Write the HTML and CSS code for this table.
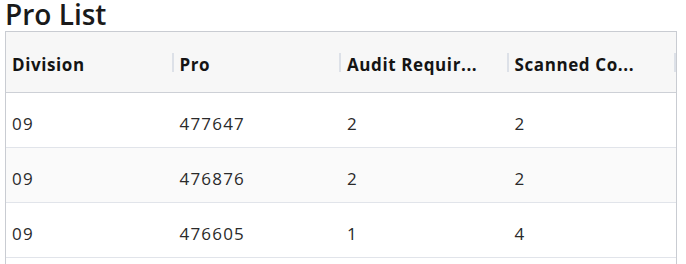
FILE: index.html
```html
<!DOCTYPE html>
<html>
<head>
<meta charset="utf-8">
<link rel="stylesheet" href="styles.css">
</head>
<body>
<h1 class="title">Pro List</h1>
<div class="table">
  <div class="row head">
    <div class="cell">Division</div>
    <div class="cell">Pro</div>
    <div class="cell">Audit Requir...</div>
    <div class="cell">Scanned Co...</div>
  </div>
  <div class="row">
    <div class="cell">09</div>
    <div class="cell">477647</div>
    <div class="cell">2</div>
    <div class="cell">2</div>
  </div>
  <div class="row alt">
    <div class="cell">09</div>
    <div class="cell">476876</div>
    <div class="cell">2</div>
    <div class="cell">2</div>
  </div>
  <div class="row">
    <div class="cell">09</div>
    <div class="cell">476605</div>
    <div class="cell">1</div>
    <div class="cell">4</div>
  </div>
  <div class="row">
    <div class="cell"></div>
    <div class="cell"></div>
    <div class="cell"></div>
    <div class="cell"></div>
  </div>
</div>
</body>
</html>
```

FILE: styles.css
```css
html, body {
  margin: 0;
  padding: 0;
  background: #ffffff;
  font-family: "Open Sans", "Noto Sans", sans-serif;
  overflow: hidden;
}

.title {
  margin: 0;
  padding: 0 0 3px 5px;
  font-size: 28px;
  line-height: 28px;
  font-weight: 600;
  color: #1a1a1a;
}

.table {
  margin-left: 5px;
  width: 670px;
  border: 1px solid #c9ccd2;
  border-bottom: none;
}

.row {
  display: grid;
  grid-template-columns: repeat(4, 1fr);
  height: 54px;
  border-bottom: 1px solid #e1e4ea;
}

.row.alt {
  background: #fafafa;
}

.row.head {
  height: 60px;
  background: #f7f7f7;
  border-bottom: 1px solid #cdd0d6;
}

.cell {
  display: flex;
  align-items: center;
  padding: 7px 0 0 6px;
  font-size: 17px;
  letter-spacing: 1.2px;
  color: #2a2a2a;
  white-space: nowrap;
  overflow: hidden;
}

.row.head .cell {
  position: relative;
  padding-top: 4px;
  font-weight: 700;
  letter-spacing: 0.6px;
  color: #141414;
}

.row.head .cell::after {
  content: "";
  position: absolute;
  right: 0;
  top: 21px;
  width: 2px;
  height: 19px;
  background: #dde1e8;
}
```
